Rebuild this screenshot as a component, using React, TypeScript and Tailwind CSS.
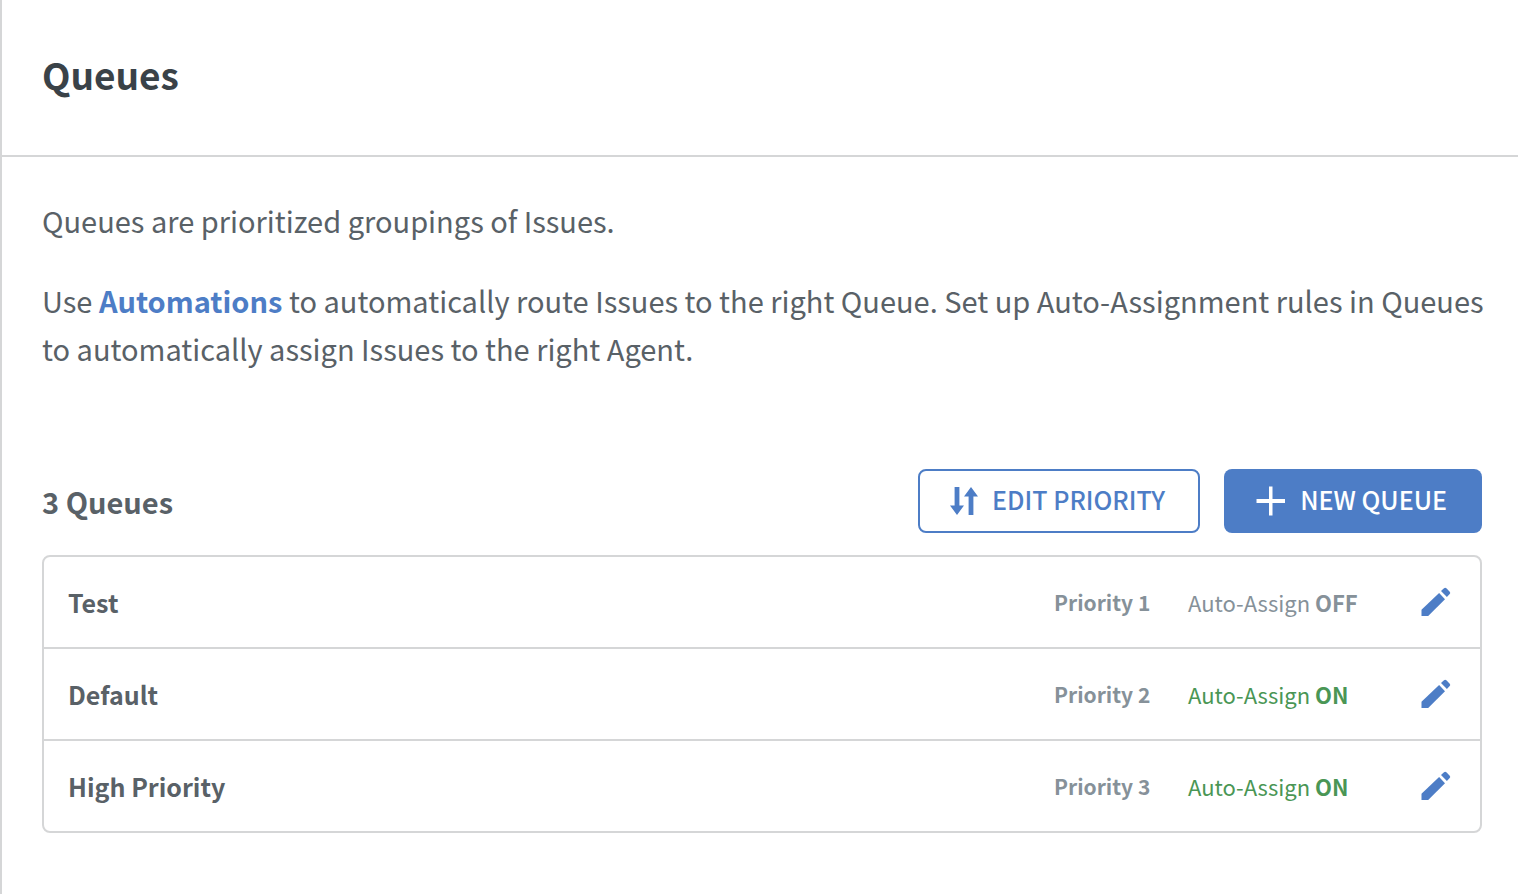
import { clsx } from 'clsx'

const queues = [
  { name: 'Test', priority: 1, autoAssign: false },
  { name: 'Default', priority: 2, autoAssign: true },
  { name: 'High Priority', priority: 3, autoAssign: true },
]

function SortIcon() {
  return (
    <svg className="h-7 w-7" viewBox="0 0 28 28" fill="currentColor" aria-hidden="true">
      <path d="M4.600 0h4.800v18.500H14L7 28 0 18.500h4.600z" />
      <path d="M18.600 28h4.800V9.500H28L21 0l-7 9.500h4.600z" />
    </svg>
  )
}

function PlusIcon() {
  return (
    <svg className="h-[30px] w-[30px]" viewBox="0 0 30 30" fill="currentColor" aria-hidden="true">
      <path d="M13 .5h3.500V13H29v4H16.500v12.500H13V17H.5v-4H13z" />
    </svg>
  )
}

function PencilIcon() {
  return (
    <svg className="h-[30px] w-[30px]" viewBox="0 0 30 30" fill="currentColor" aria-hidden="true">
      <path d="M.5 22.800v6.200h6.700L24 12.200l-5.900-6.200z" />
      <path d="M20 4.100l3-2.900q1.200-1.100 2.400 0l3.300 3.500q1.100 1.200 0 2.400l-2.800 3z" />
    </svg>
  )
}

export default function App() {
  return (
    <div className="min-h-screen border-l-2 border-[#d5d6d7] bg-white font-['Noto_Sans_CJK_SC','Noto_Sans',sans-serif] text-[#596167]">
      <header className="border-b-2 border-[#d5d6d7] px-10 pt-[46px] pb-[53px]">
        <h1 className="text-[37px] leading-14 font-bold text-[#3a4248]">Queues</h1>
      </header>

      <main className="pr-9 pl-10">
        <div className="-mr-4 pt-[39px] text-[29px] leading-12">
          <p>Queues are prioritized groupings of Issues.</p>
          <p className="mt-8">
            Use <a href="#automations" className="font-bold text-[#4d7dc6]">Automations</a> to automatically route Issues to the right Queue. Set up Auto-Assignment rules in Queues to automatically assign Issues to the right Agent.
          </p>
        </div>

        <div className="mt-[97px] flex items-center gap-6">
          <h2 className="mr-auto text-[29px] leading-12 font-bold">3 Queues</h2>
          <button type="button" className="flex h-16 items-center gap-[14px] rounded-lg border-2 border-[#4d7dc6] pr-[33px] pl-[30px] text-[25px] font-medium text-[#4d7dc6]">
            <SortIcon />
            <span className="pb-0.5">EDIT PRIORITY</span>
          </button>
          <button type="button" className="flex h-16 items-center gap-[14px] rounded-lg bg-[#4d7dc6] pr-[35px] pl-8 text-[25px] font-medium text-white">
            <PlusIcon />
            <span className="pb-0.5">NEW QUEUE</span>
          </button>
        </div>

        <div className="mt-[22px] rounded-lg border-2 border-[#d5d6d7]">
          <table className="w-full text-left leading-8">
            <tbody className="divide-y-2 divide-[#d5d6d7]">
              {queues.map((queue) => (
                <tr key={queue.name} className="h-[92px] first:h-[91px] last:h-[91px]">
                  <th scope="row" className="pl-6 text-[25px] font-bold">{queue.name}</th>
                  <td className="w-[134px] text-[21px] font-bold text-[#869199]">Priority {queue.priority}</td>
                  <td className={clsx('w-[233px] text-[22px]', queue.autoAssign ? 'text-[#4a9655]' : 'text-[#869199]')}>
                    Auto-Assign <span className="font-bold">{queue.autoAssign ? 'ON' : 'OFF'}</span>
                  </td>
                  <td className="w-[59px]">
                    <button type="button" aria-label={`Edit ${queue.name}`} className="block text-[#4d7dc6]">
                      <PencilIcon />
                    </button>
                  </td>
                </tr>
              ))}
            </tbody>
          </table>
        </div>
      </main>
    </div>
  )
}
